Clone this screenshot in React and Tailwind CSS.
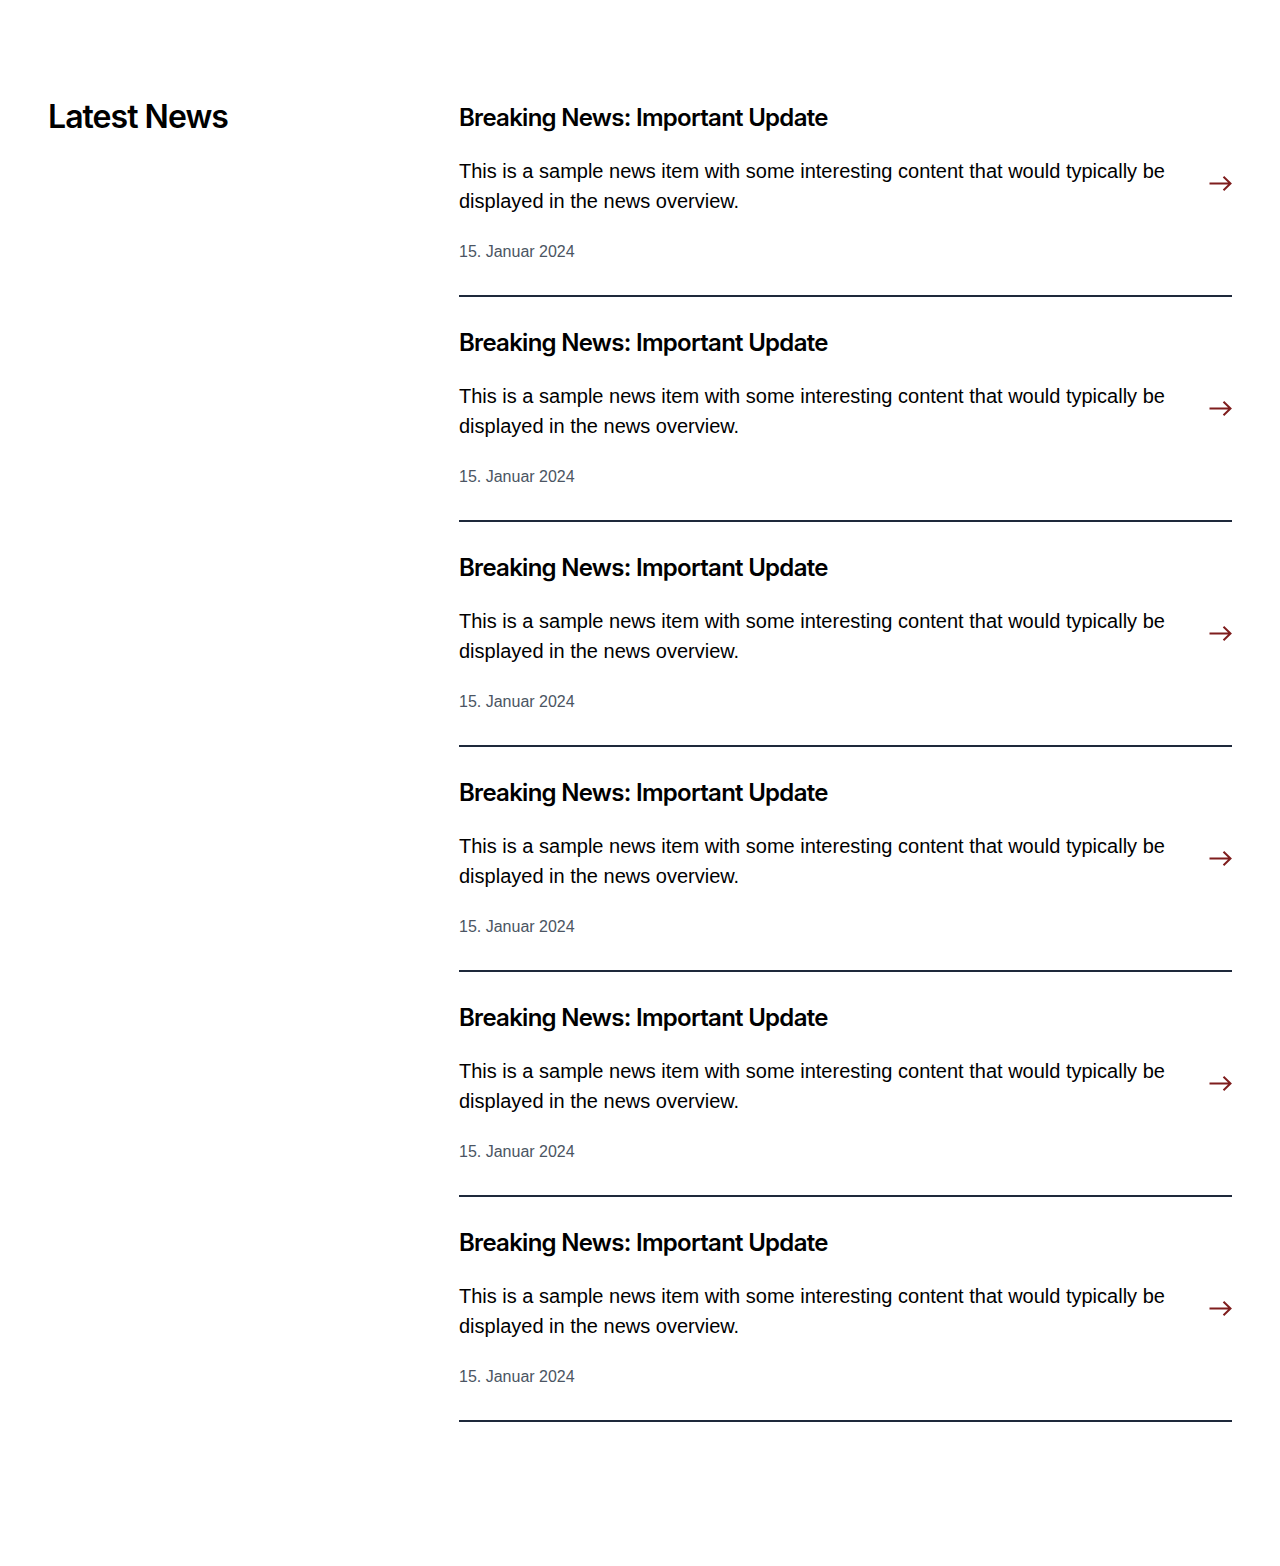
import React from "react";

function Arrow() {
  return (
    <svg width="23" height="15" viewBox="0 0 23 15" fill="none" className="shrink-0">
      <path d="M0.5 7.5H21.5M14.5 0.75L21.5 7.5L14.5 14.25" stroke="#7f1d1d" strokeWidth="2" />
    </svg>
  );
}

function Item() {
  return (
    <a href="#" className="flex items-center gap-8 pt-[31px] first:pt-0 pb-[31px] border-b-2 border-[#1e293b]">
      <div className="flex-1 min-w-0">
        <h3 className="font-['Inter',sans-serif] text-[24px] leading-[30px] font-semibold tracking-[-0.03em] text-black">
          Breaking News: Important Update
        </h3>
        <p className="mt-[23px] font-['Liberation_Sans',Arial,sans-serif] text-[20px] leading-[30px] text-black">
          This is a sample news item with some interesting content that would typically be displayed in the news overview.
        </p>
        <p className="mt-6 font-['Liberation_Sans',Arial,sans-serif] text-[16px] leading-6 text-[#4b5563]">
          15. Januar 2024
        </p>
      </div>
      <Arrow />
    </a>
  );
}

export default function App() {
  return (
    <div className="bg-white min-h-[1566px] px-12 pt-[103px] pb-[143px]">
      <div className="flex">
        <div className="w-[411px] shrink-0">
          <h2 className="font-['Inter',sans-serif] text-[32px] leading-[28px] font-semibold tracking-[-0.03em] text-black">
            Latest News
          </h2>
        </div>
        <div className="flex-1 flex flex-col">
          {Array.from({ length: 6 }).map((_, i) => (
            <Item key={i} />
          ))}
        </div>
      </div>
    </div>
  );
}
